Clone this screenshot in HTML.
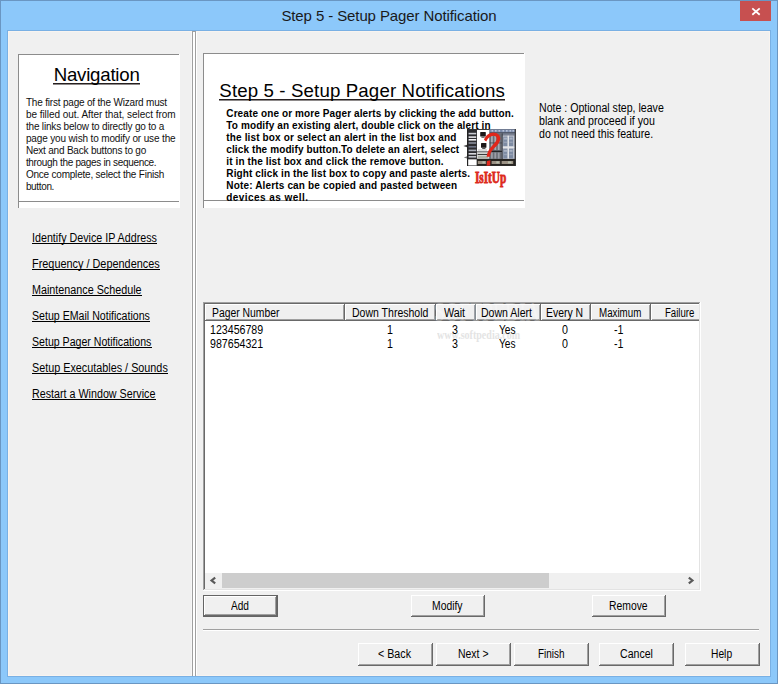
<!DOCTYPE html>
<html><head><meta charset="utf-8"><title>Step 5 - Setup Pager Notification</title>
<style>
html,body{margin:0;padding:0}
body{width:778px;height:684px;position:relative;overflow:hidden;background:#8cc8fa;font-family:"Liberation Sans",sans-serif;color:#000}
#w{position:absolute;left:0;top:0;width:778px;height:684px;overflow:hidden}
#w div,#w svg,#w .t{position:absolute}
.t{white-space:pre;margin:0;padding:0;transform-origin:0 0}
</style></head><body><div id="w">
<div style="left:0px;top:0px;width:778px;height:684px;background:#6a96c2;"></div>
<div style="left:1px;top:1px;width:776px;height:682px;background:#8cc8fa;"></div>
<div style="left:740px;top:1px;width:31px;height:20px;background:#c75050;"></div>
<svg style="left:751px;top:7px" width="10" height="9" viewBox="0 0 10 9"><path d="M1.3 1.4 L8.7 7.8 M8.7 1.4 L1.3 7.8" stroke="#fff" stroke-width="1.8" fill="none"/></svg>
<div style="left:7px;top:30px;width:764px;height:647px;background:#79b0e4;"></div>
<div style="left:8px;top:31px;width:762px;height:645px;background:#f8f4f0;"></div>
<div style="left:9px;top:32px;width:760px;height:643px;background:#f0f0f0;"></div>
<div style="left:192px;top:31px;width:1px;height:645px;background:#a0a0a0;"></div>
<div style="left:193px;top:32px;width:2px;height:644px;background:#ffffff;"></div>
<div style="left:195px;top:31px;width:1px;height:645px;background:#a0a0a0;"></div>
<div style="left:196px;top:32px;width:1px;height:643px;background:#ffffff;"></div>
<div style="left:191px;top:32px;width:1px;height:643px;background:#f7f7f7;"></div>
<div style="left:192px;top:31px;width:4px;height:1px;background:#a0a0a0;"></div>
<div style="left:18px;top:54px;width:162px;height:154px;background:#ffffff;"></div>
<div style="left:18px;top:54px;width:161px;height:1px;background:#8c8c8c;"></div>
<div style="left:18px;top:54px;width:1px;height:154px;background:#8c8c8c;"></div>
<div style="left:18px;top:201px;width:161px;height:1px;background:#8c8c8c;"></div>
<div style="left:203px;top:53px;width:322px;height:155px;background:#ffffff;"></div>
<div style="left:203px;top:53px;width:321px;height:1px;background:#8c8c8c;"></div>
<div style="left:203px;top:53px;width:1px;height:155px;background:#8c8c8c;"></div>
<div style="left:203px;top:200px;width:321px;height:1px;background:#8c8c8c;"></div>
<div style="left:53px;top:83px;width:87px;height:1px;background:#262020;"></div>
<div style="left:53px;top:84px;width:87px;height:1px;background:#8e8a8a;"></div>
<div style="left:219px;top:99px;width:286px;height:1px;background:#262020;"></div>
<div style="left:219px;top:100px;width:286px;height:1px;background:#8e8a8a;"></div>
<div style="left:32px;top:243px;width:125px;height:1px;background:#000000;"></div>
<div style="left:32px;top:269px;width:128px;height:1px;background:#000000;"></div>
<div style="left:32px;top:295px;width:110px;height:1px;background:#000000;"></div>
<div style="left:32px;top:321px;width:118px;height:1px;background:#000000;"></div>
<div style="left:32px;top:347px;width:120px;height:1px;background:#000000;"></div>
<div style="left:32px;top:373px;width:136px;height:1px;background:#000000;"></div>
<div style="left:32px;top:399px;width:124px;height:1px;background:#000000;"></div>
<div style="left:203px;top:302px;width:498px;height:289px;background:#ffffff;"></div>
<div style="left:203px;top:302px;width:497px;height:1px;background:#a0a0a0;"></div>
<div style="left:203px;top:302px;width:1px;height:288px;background:#a0a0a0;"></div>
<div style="left:204px;top:303px;width:495px;height:1px;background:#696969;"></div>
<div style="left:204px;top:303px;width:1px;height:286px;background:#696969;"></div>
<div style="left:204px;top:589px;width:496px;height:1px;background:#e3e3e3;"></div>
<div style="left:699px;top:303px;width:1px;height:287px;background:#e3e3e3;"></div>
<div style="left:205px;top:304px;width:140px;height:17px;background:#696969;"></div><div style="left:205px;top:304px;width:139px;height:16px;background:#ffffff;"></div><div style="left:206px;top:305px;width:138px;height:15px;background:#a0a0a0;"></div><div style="left:206px;top:305px;width:137px;height:14px;background:#f0f0f0;"></div>
<div style="left:345px;top:304px;width:91px;height:17px;background:#696969;"></div><div style="left:345px;top:304px;width:90px;height:16px;background:#ffffff;"></div><div style="left:346px;top:305px;width:89px;height:15px;background:#a0a0a0;"></div><div style="left:346px;top:305px;width:88px;height:14px;background:#f0f0f0;"></div>
<div style="left:436px;top:304px;width:40px;height:17px;background:#696969;"></div><div style="left:436px;top:304px;width:39px;height:16px;background:#ffffff;"></div><div style="left:437px;top:305px;width:38px;height:15px;background:#a0a0a0;"></div><div style="left:437px;top:305px;width:37px;height:14px;background:#f0f0f0;"></div>
<div style="left:476px;top:304px;width:65px;height:17px;background:#696969;"></div><div style="left:476px;top:304px;width:64px;height:16px;background:#ffffff;"></div><div style="left:477px;top:305px;width:63px;height:15px;background:#a0a0a0;"></div><div style="left:477px;top:305px;width:62px;height:14px;background:#f0f0f0;"></div>
<div style="left:541px;top:304px;width:50px;height:17px;background:#696969;"></div><div style="left:541px;top:304px;width:49px;height:16px;background:#ffffff;"></div><div style="left:542px;top:305px;width:48px;height:15px;background:#a0a0a0;"></div><div style="left:542px;top:305px;width:47px;height:14px;background:#f0f0f0;"></div>
<div style="left:591px;top:304px;width:60px;height:17px;background:#696969;"></div><div style="left:591px;top:304px;width:59px;height:16px;background:#ffffff;"></div><div style="left:592px;top:305px;width:58px;height:15px;background:#a0a0a0;"></div><div style="left:592px;top:305px;width:57px;height:14px;background:#f0f0f0;"></div>
<div style="left:651px;top:304px;width:48px;height:17px;background:#696969;"></div>
<div style="left:651px;top:304px;width:48px;height:16px;background:#ffffff;"></div>
<div style="left:652px;top:305px;width:47px;height:15px;background:#a0a0a0;"></div>
<div style="left:652px;top:305px;width:47px;height:14px;background:#f0f0f0;"></div>
<div style="left:205px;top:573px;width:494px;height:16px;background:#f0f0f0;"></div>
<div style="left:222px;top:573px;width:327px;height:15px;background:#cdcdcd;"></div>
<svg style="left:209px;top:576px" width="8" height="9" viewBox="0 0 8 9"><path d="M6.2 1.7 L2.6 4.5 L6.2 7.3" stroke="#5a5a5a" stroke-width="2.2" fill="none"/></svg>
<svg style="left:687px;top:576px" width="8" height="9" viewBox="0 0 8 9"><path d="M1.8 1.7 L5.4 4.5 L1.8 7.3" stroke="#5a5a5a" stroke-width="2.2" fill="none"/></svg>
<div style="left:203px;top:595px;width:75px;height:22px;background:#646464;"></div><div style="left:204px;top:596px;width:73px;height:20px;background:#696969;"></div><div style="left:204px;top:596px;width:72px;height:19px;background:#ffffff;"></div><div style="left:205px;top:597px;width:71px;height:18px;background:#a0a0a0;"></div><div style="left:205px;top:597px;width:70px;height:17px;background:#f0f0f0;"></div>
<div style="left:411px;top:595px;width:74px;height:22px;background:#696969;"></div><div style="left:411px;top:595px;width:73px;height:21px;background:#ffffff;"></div><div style="left:412px;top:596px;width:72px;height:20px;background:#a0a0a0;"></div><div style="left:412px;top:596px;width:71px;height:19px;background:#f0f0f0;"></div>
<div style="left:592px;top:595px;width:74px;height:22px;background:#696969;"></div><div style="left:592px;top:595px;width:73px;height:21px;background:#ffffff;"></div><div style="left:593px;top:596px;width:72px;height:20px;background:#a0a0a0;"></div><div style="left:593px;top:596px;width:71px;height:19px;background:#f0f0f0;"></div>
<div style="left:358px;top:643px;width:75px;height:23px;background:#696969;"></div><div style="left:358px;top:643px;width:74px;height:22px;background:#ffffff;"></div><div style="left:359px;top:644px;width:73px;height:21px;background:#a0a0a0;"></div><div style="left:359px;top:644px;width:72px;height:20px;background:#f0f0f0;"></div>
<div style="left:436px;top:643px;width:75px;height:23px;background:#696969;"></div><div style="left:436px;top:643px;width:74px;height:22px;background:#ffffff;"></div><div style="left:437px;top:644px;width:73px;height:21px;background:#a0a0a0;"></div><div style="left:437px;top:644px;width:72px;height:20px;background:#f0f0f0;"></div>
<div style="left:514px;top:643px;width:75px;height:23px;background:#696969;"></div><div style="left:514px;top:643px;width:74px;height:22px;background:#ffffff;"></div><div style="left:515px;top:644px;width:73px;height:21px;background:#a0a0a0;"></div><div style="left:515px;top:644px;width:72px;height:20px;background:#f0f0f0;"></div>
<div style="left:599px;top:643px;width:75px;height:23px;background:#696969;"></div><div style="left:599px;top:643px;width:74px;height:22px;background:#ffffff;"></div><div style="left:600px;top:644px;width:73px;height:21px;background:#a0a0a0;"></div><div style="left:600px;top:644px;width:72px;height:20px;background:#f0f0f0;"></div>
<div style="left:685px;top:643px;width:75px;height:23px;background:#696969;"></div><div style="left:685px;top:643px;width:74px;height:22px;background:#ffffff;"></div><div style="left:686px;top:644px;width:73px;height:21px;background:#a0a0a0;"></div><div style="left:686px;top:644px;width:72px;height:20px;background:#f0f0f0;"></div>
<div style="left:203px;top:629px;width:556px;height:1px;background:#a0a0a0;"></div>
<div style="left:203px;top:630px;width:556px;height:1px;background:#ffffff;"></div>
<svg style="left:460px;top:124px" width="64" height="68" viewBox="460 124 64 68" shape-rendering="auto">
<rect x="467" y="129" width="48.6" height="37" fill="#3a3a3c"/>
<rect x="467.6" y="129.4" width="9" height="29.6" fill="#2c2c30"/>
<rect x="468.6" y="132.8" width="7.6" height="1.6" fill="#c9cbd2"/>
<rect x="468.6" y="136.3" width="7.6" height="1.6" fill="#e6e6ea"/>
<rect x="468.6" y="139.0" width="7.6" height="1.6" fill="#f2f2f4"/>
<rect x="468.6" y="142.2" width="7.6" height="1.6" fill="#8b8f9c"/>
<rect x="468.6" y="146.0" width="7.6" height="1.6" fill="#6d7384"/>
<rect x="468.6" y="149.6" width="7.6" height="1.6" fill="#a9adb8"/>
<rect x="468.6" y="153.0" width="7.6" height="1.6" fill="#d8d9de"/>
<rect x="468.6" y="156.0" width="7.6" height="1.6" fill="#bfc1c8"/>
<rect x="468.2" y="159.4" width="8.6" height="6" fill="#ffffff"/>
<rect x="477" y="130" width="12.6" height="21.4" fill="#ffffff"/>
<rect x="480.2" y="132" width="5.6" height="4.6" rx="0.6" fill="#1c1819"/>
<rect x="481.4" y="136.6" width="3.2" height="1.2" fill="#555"/>
<rect x="481" y="143" width="5.4" height="4.8" rx="0.6" fill="#1c1819"/>
<rect x="482.2" y="147.8" width="3.2" height="1.2" fill="#555"/>
<rect x="478" y="149.6" width="9" height="0.8" fill="#aaa"/>
<rect x="477" y="152.2" width="12.6" height="6.6" fill="#d4d4d2"/>
<rect x="477.6" y="154" width="11" height="0.9" fill="#2a2a2a"/>
<rect x="478" y="156" width="10" height="2" fill="#aeb3a8"/>
<rect x="489.6" y="129.4" width="25.4" height="29.6" fill="#7a8192"/>
<rect x="489.6" y="129.4" width="25.4" height="3" fill="#7c8cab"/>
<rect x="489.6" y="132.4" width="25.4" height="0.8" fill="#3b4150"/>
<rect x="491.5" y="130" width="1.6" height="1.6" fill="#b9c4da"/>
<rect x="495" y="130" width="1.6" height="1.6" fill="#b9c4da"/>
<rect x="498.5" y="130" width="1.6" height="1.6" fill="#b9c4da"/>
<rect x="502.5" y="130" width="1.6" height="1.6" fill="#b9c4da"/>
<rect x="506" y="130" width="1.6" height="1.6" fill="#b9c4da"/>
<rect x="509.5" y="130" width="1.6" height="1.6" fill="#b9c4da"/>
<rect x="512.5" y="130" width="1.6" height="1.6" fill="#b9c4da"/>
<rect x="489.6" y="133.4" width="12.4" height="25.6" fill="#6a6d75"/>
<rect x="491" y="136" width="1.8" height="14" fill="#a9acb4"/>
<rect x="491" y="152.6" width="1.8" height="6" fill="#9a9da6"/>
<rect x="494.4" y="136" width="1.8" height="14" fill="#a9acb4"/>
<rect x="494.4" y="152.6" width="1.8" height="6" fill="#9a9da6"/>
<rect x="497.8" y="136" width="1.8" height="14" fill="#a9acb4"/>
<rect x="497.8" y="152.6" width="1.8" height="6" fill="#9a9da6"/>
<rect x="489.6" y="150.8" width="12.4" height="1.1" fill="#1d1d20"/>
<rect x="489.6" y="142.6" width="12.4" height="0.7" fill="#3c3e46"/>
<rect x="502.4" y="135.6" width="12" height="23" fill="#c5c9d1"/>
<rect x="503.2" y="136.6" width="4.4" height="9.6" fill="#7d8ba3"/>
<rect x="503.8" y="137.6" width="3.2" height="2" fill="#aab3c4"/>
<rect x="503.8" y="141.6" width="3.2" height="1.4" fill="#97a2b6"/>
<rect x="508.8" y="136.6" width="4.4" height="9.6" fill="#7d8ba3"/>
<rect x="509.40000000000003" y="137.6" width="3.2" height="2" fill="#aab3c4"/>
<rect x="509.40000000000003" y="141.6" width="3.2" height="1.4" fill="#97a2b6"/>
<rect x="503.2" y="148.8" width="4.4" height="9.6" fill="#7d8ba3"/>
<rect x="503.8" y="149.8" width="3.2" height="2" fill="#aab3c4"/>
<rect x="503.8" y="153.8" width="3.2" height="1.4" fill="#97a2b6"/>
<rect x="508.8" y="148.8" width="4.4" height="9.6" fill="#7d8ba3"/>
<rect x="509.40000000000003" y="149.8" width="3.2" height="2" fill="#aab3c4"/>
<rect x="509.40000000000003" y="153.8" width="3.2" height="1.4" fill="#97a2b6"/>
<rect x="507.7" y="135.6" width="1" height="23" fill="#f4f4f6"/>
<rect x="502.4" y="146.6" width="12" height="1.4" fill="#e3e5ea"/>
<rect x="501.8" y="133.4" width="0.8" height="25.6" fill="#2e3038"/>
<rect x="476.8" y="159" width="38.6" height="6.6" fill="#26231f"/>
<rect x="477.8" y="161" width="8.4" height="3" fill="#9c9285"/>
<rect x="482.42" y="161.4" width="2.52" height="2" fill="#b9c0b0"/>
<rect x="491.6" y="161" width="8.6" height="3" fill="#9c9285"/>
<rect x="496.33000000000004" y="161.4" width="2.5799999999999996" height="2" fill="#b9c0b0"/>
<rect x="501.6" y="161" width="11.6" height="3" fill="#9c9285"/>
<rect x="507.98" y="161.4" width="3.48" height="2" fill="#b9c0b0"/>
<rect x="514.8" y="129" width="0.9" height="37" fill="#222"/>
<rect x="467" y="129" width="0.9" height="37" fill="#222"/>
<path d="M463.4 146 L467 144.8 L467 147.2 Z" fill="#444"/>
<path d="M463.8 157.6 L467 156.2 L467 158.6 Z" fill="#777"/>
<path d="M484.0 139.8 C485.5 135.5 489.5 132.6 493.2 132.6 C497.8 132.6 500.6 135.6 500.3 139.0 C500.0 142.6 497.0 145.6 494.4 148.1 C492.0 150.6 490.4 153.0 489.9 156.8 L486.6 156.8 C487.0 152.6 489.0 149.2 492.1 145.8 C494.6 143.0 496.6 141.2 496.7 138.8 C496.8 136.8 495.4 135.7 493.4 135.7 C490.6 135.7 488.0 137.8 486.2 141.4 Z" fill="#e1271b"/>
<path d="M487.0 161 L490.4 160.2 L490.2 165.6 L486.6 165.8 Z" fill="#e1271b"/>
<text x="474.9" y="183.1" font-family="Liberation Serif,serif" font-weight="bold" font-size="17.4" fill="#dd2a1c" stroke="#dd2a1c" stroke-width="0.9" textLength="31.4" lengthAdjust="spacingAndGlyphs">IsItUp</text>
</svg>
<span class="t" id="t0" style="left:281.40px;top:7.30px;font-size:15px;line-height:18px;color:#1a1a1a;letter-spacing:-0.102px">Step 5 - Setup Pager Notification</span>
<span class="t" id="t1" style="left:53.70px;top:64.03px;font-size:18.67px;line-height:22px;;letter-spacing:-0.228px">Navigation</span>
<span class="t" id="t2" style="left:25.90px;top:97.03px;font-size:10px;line-height:12px;color:#111;letter-spacing:-0.190px">The first page of the Wizard must</span>
<span class="t" id="t3" style="left:25.90px;top:109.03px;font-size:10px;line-height:12px;color:#111;letter-spacing:-0.040px">be filled out. After that, select from</span>
<span class="t" id="t4" style="left:25.90px;top:121.03px;font-size:10px;line-height:12px;color:#111;letter-spacing:-0.177px">the links below to directly go to a</span>
<span class="t" id="t5" style="left:25.90px;top:133.03px;font-size:10px;line-height:12px;color:#111;letter-spacing:-0.146px">page you wish to modify or use the</span>
<span class="t" id="t6" style="left:25.90px;top:145.03px;font-size:10px;line-height:12px;color:#111;letter-spacing:-0.202px">Next and Back buttons to go</span>
<span class="t" id="t7" style="left:25.90px;top:157.03px;font-size:10px;line-height:12px;color:#111;letter-spacing:-0.324px">through the pages in sequence.</span>
<span class="t" id="t8" style="left:25.90px;top:169.03px;font-size:10px;line-height:12px;color:#111;letter-spacing:-0.212px">Once complete, select the Finish</span>
<span class="t" id="t9" style="left:25.90px;top:181.03px;font-size:10px;line-height:12px;color:#111;letter-spacing:-0.349px">button.</span>
<span class="t" id="t10" style="left:219.30px;top:80.03px;font-size:18.67px;line-height:22px;;letter-spacing:0.135px">Step 5 - Setup Pager Notifications</span>
<span class="t" id="t11" style="left:226.30px;top:108.03px;font-size:10px;line-height:12px;font-weight:bold;;letter-spacing:0.107px">Create one or more Pager alerts by clicking the add button.</span>
<span class="t" id="t12" style="left:226.30px;top:120.03px;font-size:10px;line-height:12px;font-weight:bold;;letter-spacing:0.117px">To modify an existing alert, double click on the alert in</span>
<span class="t" id="t13" style="left:226.30px;top:132.03px;font-size:10px;line-height:12px;font-weight:bold;;letter-spacing:0.143px">the list box or select an alert in the list box and</span>
<span class="t" id="t14" style="left:226.30px;top:144.03px;font-size:10px;line-height:12px;font-weight:bold;;letter-spacing:0.107px">click the modify button.To delete an alert, select</span>
<span class="t" id="t15" style="left:226.30px;top:156.03px;font-size:10px;line-height:12px;font-weight:bold;;letter-spacing:0.119px">it in the list box and click the remove button.</span>
<span class="t" id="t16" style="left:226.30px;top:168.03px;font-size:10px;line-height:12px;font-weight:bold;;letter-spacing:0.113px">Right click in the list box to copy and paste alerts.</span>
<span class="t" id="t17" style="left:226.30px;top:180.03px;font-size:10px;line-height:12px;font-weight:bold;;letter-spacing:0.154px">Note: Alerts can be copied and pasted between</span>
<span class="t" id="t18" style="left:226.30px;top:192.03px;font-size:10px;line-height:12px;font-weight:bold;;letter-spacing:0.443px">devices as well.</span>
<span class="t" id="t19" style="left:539.20px;top:101.34px;font-size:12px;line-height:14px;;transform:scaleX(0.8825)">Note : Optional step, leave</span>
<span class="t" id="t20" style="left:539.20px;top:114.34px;font-size:12px;line-height:14px;;transform:scaleX(0.8856)">blank and proceed if you</span>
<span class="t" id="t21" style="left:539.20px;top:127.34px;font-size:12px;line-height:14px;;transform:scaleX(0.8815)">do not need this feature.</span>
<span class="t" id="t22" style="left:32.00px;top:231.34px;font-size:12px;line-height:14px;;transform:scaleX(0.8930)">Identify Device IP Address</span>
<span class="t" id="t23" style="left:32.00px;top:257.34px;font-size:12px;line-height:14px;;transform:scaleX(0.9072)">Frequency / Dependences</span>
<span class="t" id="t24" style="left:32.00px;top:283.34px;font-size:12px;line-height:14px;;transform:scaleX(0.8977)">Maintenance Schedule</span>
<span class="t" id="t25" style="left:32.00px;top:309.34px;font-size:12px;line-height:14px;;transform:scaleX(0.8838)">Setup EMail Notifications</span>
<span class="t" id="t26" style="left:32.00px;top:335.34px;font-size:12px;line-height:14px;;transform:scaleX(0.8817)">Setup Pager Notifications</span>
<span class="t" id="t27" style="left:32.00px;top:361.34px;font-size:12px;line-height:14px;;transform:scaleX(0.9006)">Setup Executables / Sounds</span>
<span class="t" id="t28" style="left:32.00px;top:387.34px;font-size:12px;line-height:14px;;transform:scaleX(0.8935)">Restart a Window Service</span>
<span class="t" id="t29" style="left:434.00px;top:296.14px;font-size:27px;line-height:32px;font-family:'Liberation Serif',serif;color:rgba(255,255,255,.3);transform:scaleX(0.7284)">SOFTPEDIA</span>
<span class="t" id="t30" style="left:211.60px;top:306.34px;font-size:12px;line-height:14px;;transform:scaleX(0.8649)">Pager Number</span>
<span class="t" id="t31" style="left:351.60px;top:306.34px;font-size:12px;line-height:14px;;transform:scaleX(0.8764)">Down Threshold</span>
<span class="t" id="t32" style="left:444.25px;top:306.34px;font-size:12px;line-height:14px;;transform:scaleX(0.8955)">Wait</span>
<span class="t" id="t33" style="left:481.20px;top:306.34px;font-size:12px;line-height:14px;;transform:scaleX(0.8788)">Down Alert</span>
<span class="t" id="t34" style="left:546.20px;top:306.34px;font-size:12px;line-height:14px;;transform:scaleX(0.8668)">Every N</span>
<span class="t" id="t35" style="left:598.75px;top:306.34px;font-size:12px;line-height:14px;;transform:scaleX(0.8132)">Maximum</span>
<span class="t" id="t36" style="left:664.90px;top:306.34px;font-size:12px;line-height:14px;;transform:scaleX(0.8014)">Failure</span>
<span class="t" id="t37" style="left:437.00px;top:328.34px;font-size:12px;line-height:14px;font-weight:bold;font-family:'Liberation Serif',serif;color:#e4e4e4;transform:scaleX(0.8356)">www.softpedia.com</span>
<span class="t" id="t38" style="left:209.60px;top:323.34px;font-size:12px;line-height:14px;;transform:scaleX(0.8855)">123456789</span>
<span class="t" id="t39" style="left:386.82px;top:323.34px;font-size:12px;line-height:14px;;transform:scaleX(0.8900)">1</span>
<span class="t" id="t40" style="left:452.02px;top:323.34px;font-size:12px;line-height:14px;;transform:scaleX(0.8900)">3</span>
<span class="t" id="t41" style="left:498.75px;top:323.34px;font-size:12px;line-height:14px;;transform:scaleX(0.8428)">Yes</span>
<span class="t" id="t42" style="left:561.72px;top:323.34px;font-size:12px;line-height:14px;;transform:scaleX(0.8900)">0</span>
<span class="t" id="t43" style="left:614.25px;top:323.34px;font-size:12px;line-height:14px;;transform:scaleX(0.8900)">-1</span>
<span class="t" id="t44" style="left:209.60px;top:337.34px;font-size:12px;line-height:14px;;transform:scaleX(0.8855)">987654321</span>
<span class="t" id="t45" style="left:386.82px;top:337.34px;font-size:12px;line-height:14px;;transform:scaleX(0.8900)">1</span>
<span class="t" id="t46" style="left:452.02px;top:337.34px;font-size:12px;line-height:14px;;transform:scaleX(0.8900)">3</span>
<span class="t" id="t47" style="left:498.75px;top:337.34px;font-size:12px;line-height:14px;;transform:scaleX(0.8428)">Yes</span>
<span class="t" id="t48" style="left:561.72px;top:337.34px;font-size:12px;line-height:14px;;transform:scaleX(0.8900)">0</span>
<span class="t" id="t49" style="left:614.25px;top:337.34px;font-size:12px;line-height:14px;;transform:scaleX(0.8900)">-1</span>
<span class="t" id="t50" style="left:231.00px;top:599.34px;font-size:12px;line-height:14px;;transform:scaleX(0.8427)">Add</span>
<span class="t" id="t51" style="left:432.15px;top:599.34px;font-size:12px;line-height:14px;;transform:scaleX(0.8630)">Modify</span>
<span class="t" id="t52" style="left:608.70px;top:599.34px;font-size:12px;line-height:14px;;transform:scaleX(0.8638)">Remove</span>
<span class="t" id="t53" style="left:378.10px;top:647.34px;font-size:12px;line-height:14px;;transform:scaleX(0.8911)">&lt; Back</span>
<span class="t" id="t54" style="left:458.25px;top:647.34px;font-size:12px;line-height:14px;;transform:scaleX(0.8710)">Next &gt;</span>
<span class="t" id="t55" style="left:538.15px;top:647.34px;font-size:12px;line-height:14px;;transform:scaleX(0.8277)">Finish</span>
<span class="t" id="t56" style="left:619.65px;top:647.34px;font-size:12px;line-height:14px;;transform:scaleX(0.8806)">Cancel</span>
<span class="t" id="t57" style="left:711.15px;top:647.34px;font-size:12px;line-height:14px;;transform:scaleX(0.8547)">Help</span>
</div></body></html>
